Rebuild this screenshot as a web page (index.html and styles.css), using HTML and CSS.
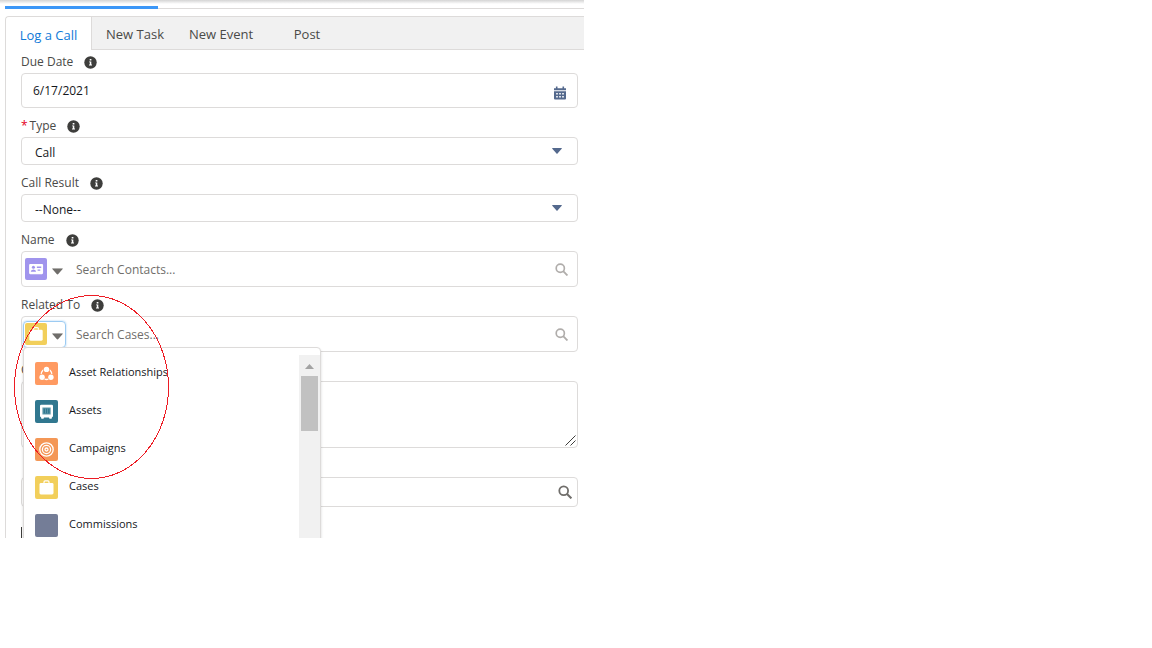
FILE: index.html
```html
<!DOCTYPE html>
<html lang="en">
<head>
  <meta charset="UTF-8">
  <meta name="viewport" content="width=device-width, initial-scale=1.0">
  <title>Log a Call</title>
  <link rel="stylesheet" href="styles.css">
</head>
<body>
  <svg class="sprite" aria-hidden="true">
    <symbol id="info" viewBox="0 0 13 13">
      <circle cx="6.5" cy="6.5" r="6.2" fill="#3e3e3c"/>
      <path d="M5.7 3h1.7v1.4H5.7zM5.1 5.4h2.2v3.2h.7v.9H5v-.9h.8V6.3h-.7z" fill="#fff"/>
    </symbol>
    <symbol id="search" viewBox="0 0 14 14">
      <circle cx="5.7" cy="5.7" r="4.4" fill="none" stroke="currentColor" stroke-width="1.8"/>
      <path d="M8.8 8.8l4.6 4.6" stroke="currentColor" stroke-width="2"/>
    </symbol>
    <symbol id="down" viewBox="0 0 10 6">
      <path d="M.6 0h8.8q.8 0 .3.7L5.5 5.6q-.5.6-1 0L.3.7Q-.2 0 .6 0z" fill="currentColor"/>
    </symbol>
    <symbol id="case" viewBox="0 0 23 23">
      <path d="M9 7V5.9q0-1 1-1h3q1 0 1 1V7" fill="none" stroke="#fff" stroke-width="1.2"/>
      <rect x="4.5" y="7" width="14" height="11.5" rx="1.4" fill="#fff"/>
    </symbol>
  </svg>

  <main class="panel">
    <div class="progress"><div class="progress-bar"></div></div>

    <section class="composer">
      <nav class="tabs">
        <button type="button" class="tab active">Log a Call</button>
        <button type="button" class="tab">New Task</button>
        <button type="button" class="tab">New Event</button>
        <button type="button" class="tab">Post</button>
      </nav>

      <form class="form">
        <div class="field">
          <div class="field-label">
            <label for="dueDate">Due Date</label>
            <svg class="info"><use href="#info"/></svg>
          </div>
          <div class="box date-box">
            <input type="text" id="dueDate" class="control" value="6/17/2021">
            <button type="button" class="icon-btn calendar" aria-label="Pick a date">
              <svg width="12" height="14" viewBox="0 0 12 14">
                <path d="M0 2.2h1.9V.5h1.6v1.7h5V.5h1.6v1.7H12v2.1H0z" fill="#54698d"/>
                <path d="M0 5.3h12v7.2q0 1-1 1H1q-1 0-1-1z" fill="#54698d"/>
                <path d="M2.2 7h1.6v1.6H2.2zM5.2 7h1.6v1.6H5.2zM8.2 7h1.6v1.6H8.2zM2.2 9.9h1.6v1.6H2.2zM5.2 9.9h1.6v1.6H5.2zM8.2 9.9h1.6v1.6H8.2z" fill="#fff"/>
              </svg>
            </button>
          </div>
        </div>

        <div class="field">
          <div class="field-label">
            <label for="type"><span class="required">*</span>Type</label>
            <svg class="info"><use href="#info"/></svg>
          </div>
          <div class="box select-box">
            <select id="type" class="control">
              <option>Call</option>
            </select>
            <svg class="select-arrow"><use href="#down"/></svg>
          </div>
        </div>

        <div class="field">
          <div class="field-label">
            <label for="result">Call Result</label>
            <svg class="info"><use href="#info"/></svg>
          </div>
          <div class="box select-box">
            <select id="result" class="control">
              <option>--None--</option>
            </select>
            <svg class="select-arrow"><use href="#down"/></svg>
          </div>
        </div>

        <div class="field">
          <div class="field-label">
            <label for="name">Name</label>
            <svg class="info"><use href="#info"/></svg>
          </div>
          <div class="box lookup">
            <button type="button" class="entity" aria-label="Contacts">
              <svg class="entity-icon contact" viewBox="0 0 23 23">
                <rect x="4.3" y="6.2" width="14.6" height="10.8" rx="1.2" fill="#fff"/>
                <circle cx="8.8" cy="9.6" r="1.6" fill="#a094ed"/>
                <path d="M6 14.3q0-2.1 2.8-2.4 2.8.3 2.8 2.4z" fill="#a094ed"/>
                <path d="M12.4 9h4.6v1.4h-4.6zM13.2 12h2.8v1.4h-2.8z" fill="#a094ed"/>
              </svg>
              <svg class="entity-arrow" viewBox="0 0 10 6"><use href="#down"/></svg>
            </button>
            <input type="text" id="name" class="control" placeholder="Search Contacts...">
            <svg class="search light"><use href="#search"/></svg>
          </div>
        </div>

        <div class="field">
          <div class="field-label">
            <label for="related">Related To</label>
            <svg class="info"><use href="#info"/></svg>
          </div>
          <div class="box lookup">
            <button type="button" class="entity focused" aria-label="Cases">
              <svg class="entity-icon case" viewBox="0 0 23 23"><use href="#case"/></svg>
              <svg class="entity-arrow" viewBox="0 0 10 6"><use href="#down"/></svg>
            </button>
            <input type="text" id="related" class="control" placeholder="Search Cases...">
            <svg class="search light"><use href="#search"/></svg>

            <div class="menu">
              <ul class="menu-list">
                <li><a href="#" class="menu-item">
                  <svg class="menu-icon relationship" viewBox="0 0 23 23">
                    <circle cx="11.5" cy="12.2" r="5.3" fill="none" stroke="#fff" stroke-width="1.3"/>
                    <circle cx="11.5" cy="7.6" r="3.3" fill="#ff9a61"/>
                    <circle cx="7.2" cy="15" r="3.2" fill="#ff9a61"/>
                    <circle cx="15.8" cy="15" r="3.2" fill="#ff9a61"/>
                    <circle cx="11.5" cy="7.4" r="2.7" fill="#fff"/>
                    <circle cx="7.1" cy="15.2" r="2.7" fill="#fff"/>
                    <circle cx="15.9" cy="15.2" r="2.7" fill="#fff"/>
                  </svg>
                  Asset Relationships
                </a></li>
                <li><a href="#" class="menu-item">
                  <svg class="menu-icon asset" viewBox="0 0 23 23">
                    <path d="M6.2 4.7h10.6q1.2 0 1.2 1.2v10.2q0 1-1 1.2l-.4 1.5h-2.1l-.5-1.4H9l-.5 1.4H6.4L6 17.3q-1-.2-1-1.2V5.9q0-1.2 1.2-1.2z" fill="#fff"/>
                    <path d="M7.4 7.5h8.3v6.9H7.4z" fill="#5f9bac"/>
                    <path d="M8.6 8.6h6v4.8h-6z" fill="#30778f"/>
                    <path d="M10.5 8.6v4.8M12.6 8.6v4.8" stroke="#6fa5b5" stroke-width=".7"/>
                  </svg>
                  Assets
                </a></li>
                <li><a href="#" class="menu-item">
                  <svg class="menu-icon campaign" viewBox="0 0 23 23" fill="none" stroke="#fff" stroke-width="1.3">
                    <circle cx="11.5" cy="11.5" r="6.7"/>
                    <circle cx="11.5" cy="11.5" r="4.1"/>
                    <circle cx="11.5" cy="11.5" r="1.5"/>
                  </svg>
                  Campaigns
                </a></li>
                <li><a href="#" class="menu-item">
                  <svg class="menu-icon case" viewBox="0 0 23 23"><use href="#case"/></svg>
                  Cases
                </a></li>
                <li><a href="#" class="menu-item">
                  <svg class="menu-icon commission" viewBox="0 0 23 23"></svg>
                  Commissions
                </a></li>
              </ul>
              <div class="scrollbar">
                <svg width="9" height="5" viewBox="0 0 9 5"><path d="M4.5 0L9 5H0z" fill="#a3a3a3"/></svg>
                <div class="thumb"></div>
              </div>
            </div>
          </div>
        </div>

        <div class="field">
          <div class="field-label">
            <label for="comments">C</label>
          </div>
          <div class="box">
            <textarea id="comments" class="control comments"></textarea>
            <svg class="grip" width="11" height="11" viewBox="0 0 11 11">
              <path d="M.5 10.5l10-10M5.5 10.5l5-5" stroke="#3e3e3c"/>
            </svg>
          </div>
        </div>

        <div class="field">
          <div class="field-label"></div>
          <div class="box search-box">
            <input type="text" class="control" aria-label="Search">
            <svg class="search"><use href="#search"/></svg>
          </div>
        </div>

        <div class="next-field"></div>
      </form>
    </section>

    <svg class="highlight" viewBox="0 0 155 184" aria-hidden="true">
      <ellipse cx="77.5" cy="92" rx="77" ry="91.5" fill="none" stroke="#ed1c24" shape-rendering="crispEdges"/>
    </svg>
  </main>
</body>
</html>
```

FILE: styles.css
```css
* {
  box-sizing: border-box;
}

body {
  margin: 0;
  background-color: #fff;
  color: #4a4a48;
  font-family: "Open Sans", "Noto Sans", sans-serif;
  font-size: 12px;
}

button,
input,
select,
textarea {
  font: inherit;
  color: inherit;
}

button {
  padding: 0;
  border: 0;
  background: none;
}

svg {
  display: block;
  flex: none;
}

.sprite {
  position: absolute;
  width: 0;
  height: 0;
}

.panel {
  position: relative;
  max-width: 584px;
  max-height: 538px;
  overflow: hidden;
  padding-left: 5px;
  background: linear-gradient(#d4d4d4, #fff 4px);
}

.progress {
  padding-top: 6px;
  border-bottom: 1px solid #dddbda;
}

.progress-bar {
  width: 153px;
  height: 3px;
  margin-bottom: -1px;
  background-color: #3c97f7;
}

.composer {
  margin-top: 7px;
  border-left: 1px solid #dddbda;
  border-top: 1px solid #dddbda;
  border-top-left-radius: 4px;
}

.tabs {
  display: flex;
  height: 33px;
  background-color: #f1f1f1;
  border-bottom: 1px solid #dddbda;
  border-top-left-radius: 4px;
}

.tab {
  width: 86px;
  padding-top: 2px;
  font-size: 13px;
}

.tab.active {
  height: 33px;
  background-color: #fff;
  border-right: 1px solid #dddbda;
  border-top-left-radius: 4px;
  color: #0f7ad8;
}

.form {
  display: flex;
  flex-direction: column;
  gap: 6px;
  padding: 0 6px 0 15px;
}

.field-label {
  display: flex;
  align-items: center;
  gap: 11px;
  height: 23px;
}

.required {
  margin-right: 2px;
  color: #e4001b;
}

.info {
  width: 13px;
  height: 13px;
  margin-top: 2px;
}

.box {
  position: relative;
  display: flex;
  align-items: center;
  width: 100%;
  border: 1px solid #dddbda;
  border-radius: 4px;
  background-color: #fff;
}

.control {
  flex: 1;
  min-width: 0;
  height: 100%;
  padding: 0;
  border: 0;
  outline: 0;
  background: none;
  color: #16181c;
}

.control::placeholder {
  color: #706e6b;
  opacity: 1;
}

.date-box {
  height: 35px;
  padding: 0 11px;
}

.calendar {
  margin-top: 5px;
}

.select-box {
  height: 28px;
  padding: 2px 15px 0 13px;
}

.select-box .control {
  appearance: none;
}

.select-arrow {
  width: 10px;
  height: 6px;
  margin-bottom: 3px;
  color: #54698d;
}

.lookup {
  height: 36px;
  padding: 0 9px 0 1px;
}

.entity {
  display: flex;
  align-items: center;
  gap: 5px;
  width: 43px;
  height: 27px;
  margin-right: 10px;
  padding-left: 1px;
  border: 1px solid transparent;
  border-radius: 4px;
}

.entity.focused {
  border-color: #9ccbf2;
  box-shadow: 0 0 2px #9ccbf2;
}

.entity-icon {
  width: 22px;
  height: 22px;
  border-radius: 2px;
}

.entity-arrow {
  width: 11px;
  height: 7px;
  margin-top: 5px;
  color: #706e6b;
}

.contact {
  background-color: #a094ed;
}

.case {
  background-color: #f2cf5b;
}

.relationship {
  background-color: #ff9a61;
}

.asset {
  background-color: #30778f;
}

.campaign {
  background-color: #f49756;
}

.commission {
  background-color: #747d97;
}

.search {
  width: 14px;
  height: 14px;
  color: #706e6b;
}

.search.light {
  width: 13px;
  height: 13px;
  color: #b0adab;
}

.menu {
  position: absolute;
  top: 30px;
  left: 1px;
  z-index: 1;
  display: flex;
  width: 298px;
  height: 240px;
  padding-top: 7px;
  border: 1px solid #dddbda;
  border-radius: 4px;
  background-color: #fff;
  box-shadow: 0 2px 3px rgba(0, 0, 0, 0.16);
}

.menu-list {
  display: flex;
  flex: 1;
  flex-direction: column;
  gap: 15px;
  margin: 0;
  padding: 7px 0 0 11px;
  list-style: none;
}

.menu-item {
  display: flex;
  gap: 11px;
  height: 23px;
  color: #16181c;
  font-size: 11px;
  line-height: 20px;
  text-decoration: none;
}

.menu-icon {
  width: 23px;
  height: 23px;
  border-radius: 2px;
}

.scrollbar {
  display: flex;
  flex-direction: column;
  align-items: center;
  gap: 7px;
  width: 21px;
  padding-top: 9px;
  background-color: #f1f1f1;
}

.thumb {
  width: 17px;
  height: 55px;
  background-color: #c1c1c1;
}

.comments {
  height: 65px;
  resize: none;
}

.grip {
  align-self: flex-end;
  margin: 0 1px 1px 0;
}

.search-box {
  height: 30px;
  padding: 0 5px 0 11px;
}

/* left edge of the field cut off below the panel */
.next-field {
  height: 25px;
  margin-top: 14px;
  border-left: 1px solid #3e3e3c;
}

.highlight {
  position: absolute;
  top: 295px;
  left: 14px;
  z-index: 2;
  width: 155px;
  height: 184px;
  pointer-events: none;
}
```
